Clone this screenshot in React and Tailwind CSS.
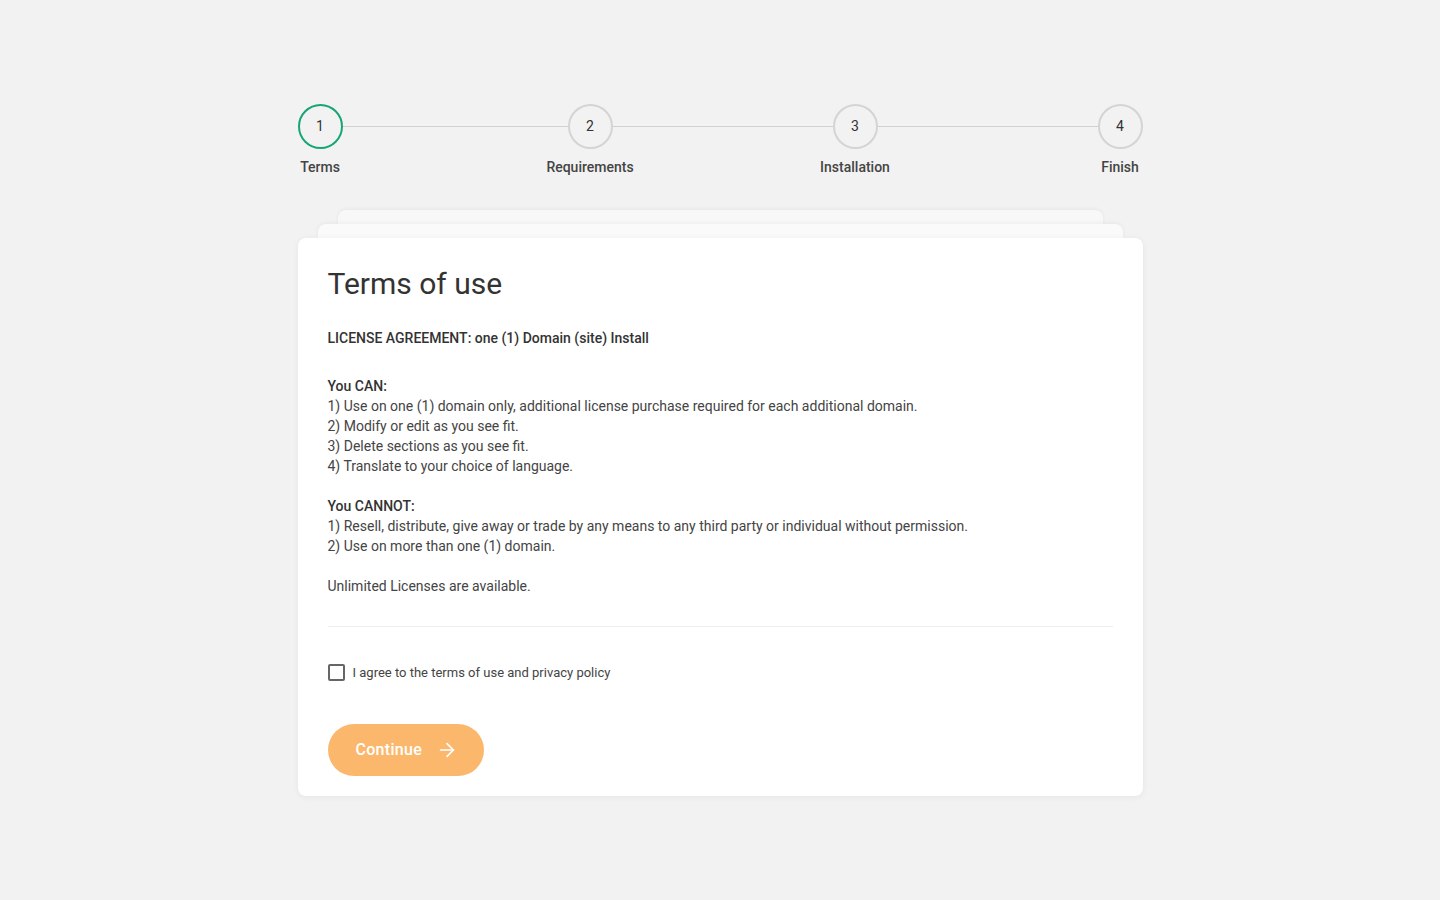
import React from "react";
import { ArrowRight } from "lucide-react";

function Step({ n, label, active }) {
  return (
    <div className="relative flex w-[45px] shrink-0 flex-col items-center">
      <div
        className={
          "flex h-[45px] w-[45px] items-center justify-center rounded-full border-2 text-[14px] text-[#333] " +
          (active ? "border-[#17a577]" : "border-[#d4d4d4]")
        }
      >
        {n}
      </div>
      <div className="mt-[8px] whitespace-nowrap text-[14px] font-medium leading-[20px] text-[#444]">
        {label}
      </div>
    </div>
  );
}

function Line({ w }) {
  return <div className={"mt-[22px] h-px self-start bg-[#d0d0d0] " + w} />;
}

export default function App() {
  return (
    <div
      className="min-h-[900px] w-full bg-[#f2f2f2] pt-[104px]"
      style={{ fontFamily: "Roboto, 'Liberation Sans', sans-serif" }}
    >
      <div className="mx-auto w-[845px]">
        <div className="flex items-start">
          <Step n="1" label="Terms" active />
          <Line w="w-[225px]" />
          <Step n="2" label="Requirements" />
          <Line w="w-[220px]" />
          <Step n="3" label="Installation" />
          <Line w="w-[220px]" />
          <Step n="4" label="Finish" />
        </div>

        <div className="mt-[33px]">
          <div className="mx-[40px] h-[14px] rounded-t-[8px] bg-[#f8f8f8] shadow-[0_-1px_4px_rgba(0,0,0,0.05)]" />
          <div className="mx-[20px] h-[14px] rounded-t-[8px] bg-[#fafafa] shadow-[0_-1px_4px_rgba(0,0,0,0.05)]" />
          <div className="rounded-[8px] bg-white px-[30px] pb-[20px] pt-[27px] shadow-[0_1px_6px_rgba(0,0,0,0.06)]">
            <h1 className="text-[30px] font-normal leading-[38px] text-[#333]">Terms of use</h1>
            <div className="mt-[25px] text-[14px] leading-[20px] text-[#444]">
              <p className="mb-[28px] font-medium text-[#333]">
                LICENSE AGREEMENT: one (1) Domain (site) Install
              </p>
              <p className="font-medium text-[#333]">You CAN:</p>
              <p>1) Use on one (1) domain only, additional license purchase required for each additional domain.</p>
              <p>2) Modify or edit as you see fit.</p>
              <p>3) Delete sections as you see fit.</p>
              <p>4) Translate to your choice of language.</p>
              <p className="mt-[20px] font-medium text-[#333]">You CANNOT:</p>
              <p>1) Resell, distribute, give away or trade by any means to any third party or individual without permission.</p>
              <p>2) Use on more than one (1) domain.</p>
              <p className="mt-[20px]">Unlimited Licenses are available.</p>
            </div>
            <div className="mt-[30px] h-px bg-[#efefef]" />
            <label className="mt-[37px] flex items-center gap-[8px]">
              <span className="block h-[17px] w-[17px] rounded-[2px] border-2 border-[#666]" />
              <span className="text-[13px] leading-[16px] text-[#444]">
                I agree to the terms of use and privacy policy
              </span>
            </label>
            <button className="mt-[43px] flex h-[52px] w-[156px] items-center gap-[14px] rounded-full bg-[#fbb86c] pl-[28px] text-[16px] font-medium tracking-[0.3px] text-white">
              Continue
              <ArrowRight size={22} strokeWidth={1.8} />
            </button>
          </div>
        </div>
      </div>
    </div>
  );
}
